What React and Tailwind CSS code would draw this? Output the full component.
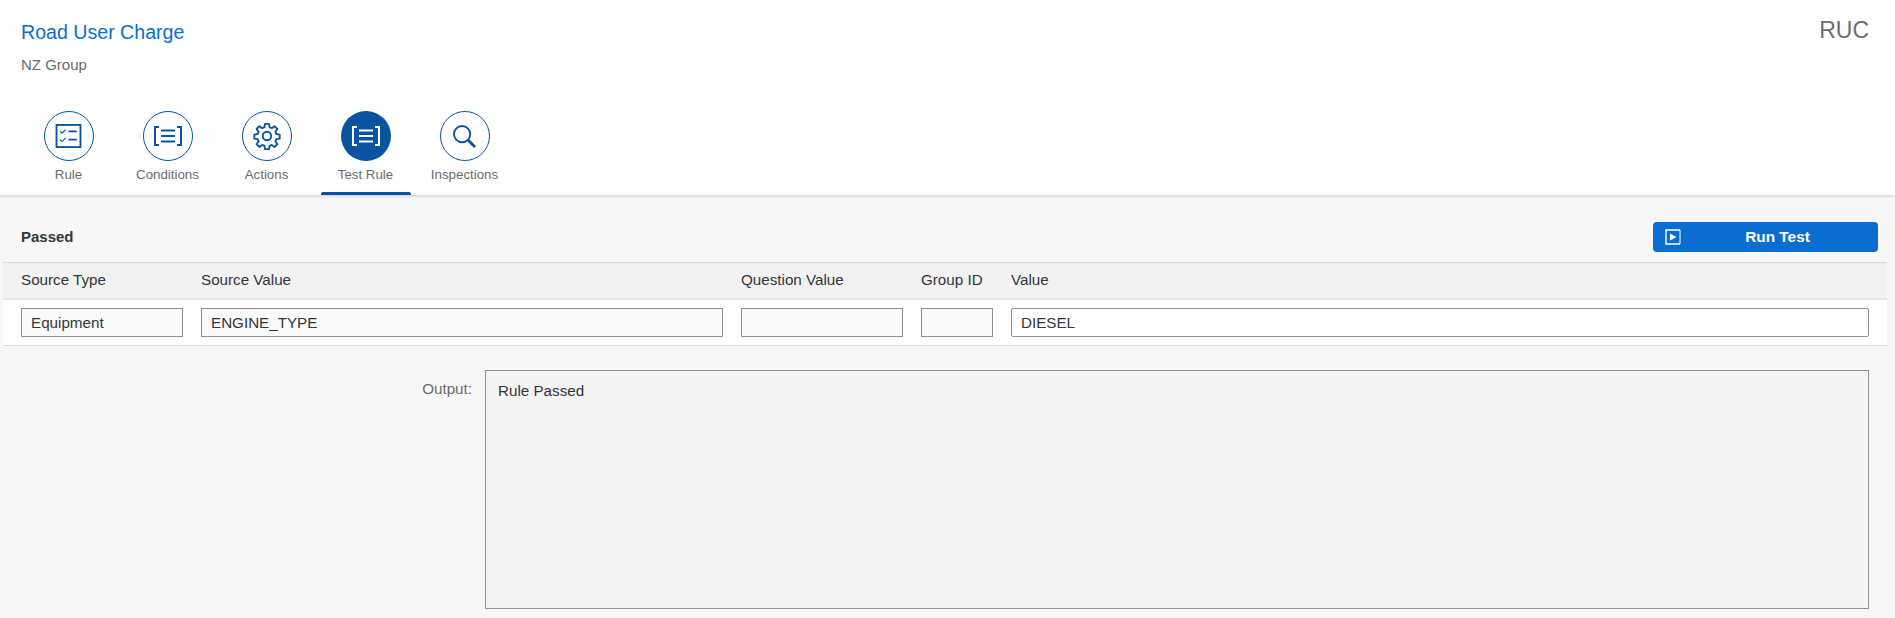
const font = { fontFamily: '"Liberation Sans", Arial, sans-serif' }

const ChecklistIcon = () => (
  <svg viewBox="0 0 28 26" className="w-[27px] h-[24px]" fill="none" stroke="currentColor">
    <rect x="1" y="1" width="26" height="24" strokeWidth="2" />
    <path d="M5 8l2 2 4-4M5 17l2 2 4-4" strokeWidth="1.2" />
    <path d="M14 8h9M14 17h9" strokeWidth="2" />
  </svg>
)

const BracketsIcon = () => (
  <svg viewBox="0 0 28 20" className="w-[28px] h-[20px]" fill="none" stroke="currentColor" strokeWidth="2">
    <path d="M5 1H1v18h4M23 1h4v18h-4" />
    <path d="M7 4.5h14M7 10h14M7 15.5h14" />
  </svg>
)

const GearIcon = () => (
  <svg viewBox="0 0 24 24" className="w-[28px] h-[28px]" fill="none" stroke="currentColor" strokeWidth="1.6">
    <circle cx="12" cy="12" r="3.6" />
    <path d="M10.3 1.6h3.4l.5 2.9 1.9.8 2.4-1.7 2.4 2.4-1.7 2.4.8 1.9 2.9.5v3.4l-2.9.5-.8 1.9 1.7 2.4-2.4 2.4-2.4-1.7-1.9.8-.5 2.9h-3.4l-.5-2.9-1.9-.8-2.4 1.7-2.4-2.4 1.7-2.4-.8-1.9-2.9-.5v-3.4l2.9-.5.8-1.9-1.7-2.4 2.4-2.4 2.4 1.7 1.9-.8z" strokeLinejoin="round" />
  </svg>
)

const SearchIcon = () => (
  <svg viewBox="0 0 24 24" className="w-[23px] h-[23px]" fill="none" stroke="currentColor" strokeWidth="2">
    <circle cx="9.5" cy="9.5" r="8.5" />
    <path d="M15.5 15.5l7.5 7.5" strokeWidth="3" />
  </svg>
)

const tabs = [
  { label: "Rule", icon: <ChecklistIcon /> },
  { label: "Conditions", icon: <BracketsIcon /> },
  { label: "Actions", icon: <GearIcon /> },
  { label: "Test Rule", icon: <BracketsIcon />, active: true },
  { label: "Inspections", icon: <SearchIcon /> },
]

const columns = [
  { label: "Source Type", value: "Equipment", width: "w-[180px]" },
  { label: "Source Value", value: "ENGINE_TYPE", width: "w-[540px]" },
  { label: "Question Value", value: "", width: "w-[180px]" },
  { label: "Group ID", value: "", width: "w-[90px]" },
  { label: "Value", value: "DIESEL", width: "flex-1", editable: true },
]

function Tab({ tab }) {
  return (
    <div className="relative w-[90px] h-[84px] flex flex-col items-center">
      <div
        className={
          tab.active
            ? "w-[50px] h-[50px] rounded-full flex items-center justify-center bg-[#0a53a0] text-white"
            : "w-[50px] h-[50px] rounded-full flex items-center justify-center border border-[#0a53a0] text-[#0a53a0] bg-white"
        }
      >
        {tab.icon}
      </div>
      <span className="mt-[4px] text-[13.3px] leading-[20px] text-[#6a6d70] whitespace-nowrap">{tab.label}</span>
      {tab.active && <div className="absolute bottom-0 left-0 w-[90px] h-[3.5px] rounded-t-[2px] bg-[#0a53a0]" />}
    </div>
  )
}

export default function App() {
  return (
    <div className="h-[618px] overflow-hidden bg-[#f7f7f7] text-[#32363a]" style={font}>
      <header className="h-[195px] bg-white shadow-[0_1px_3px_rgba(0,0,0,0.2)] relative">
        <div className="flex justify-between pl-[21px] pr-[26px] pt-[18px]">
          <div>
            <h1 className="text-[19.6px] leading-[28px] text-[#0a6ed1]">Road User Charge</h1>
            <p className="mt-[9px] text-[15px] leading-[20px] text-[#6a6d70]">NZ Group</p>
          </div>
          <div className="text-[23px] leading-[24px] text-[#6a6d70]">RUC</div>
        </div>
        <nav className="flex gap-[9px] pl-[23.5px] mt-[36px]">
          {tabs.map((tab) => (
            <Tab key={tab.label} tab={tab} />
          ))}
        </nav>
      </header>

      <div className="flex items-center justify-between pl-[21px] pr-[17px] pt-[27px] pb-[10px]">
        <span className="text-[15px] font-bold">Passed</span>
        <button className="w-[225px] h-[30px] rounded-[4px] bg-[#0a6ed1] flex items-center pl-[12px] text-white">
          <svg viewBox="0 0 16 16" className="w-[16px] h-[16px]" fill="none">
            <path d="M15 1H1v14h14" stroke="currentColor" strokeWidth="1.4" />
            <path d="M15 1v14" stroke="currentColor" strokeWidth="1" />
            <path d="M5 4.5l6.5 3.5L5 11.5z" fill="currentColor" />
          </svg>
          <span className="flex-1 pr-[4px] text-[15.4px] font-bold">Run Test</span>
        </button>
      </div>

      <div className="ml-[3px] mr-[8px]">
        <div className="flex h-[38px] items-center pl-[18px] bg-[#f2f2f2] border-t border-[#d9d9d9] border-b-2 border-b-[#e5e5e5]">
          {columns.map((col) => (
            <div key={col.label} className={col.width + " text-[15.2px] text-[#32363a]"}>
              {col.label}
            </div>
          ))}
        </div>
        <div className="flex h-[46px] items-center pl-[18px] pr-[18px] bg-white border-b border-[#d9d9d9]">
          {columns.map((col) => (
            <div key={col.label} className={col.width + (col.editable ? "" : " pr-[18px]")}>
              <input
                readOnly
                value={col.value}
                className={
                  col.editable
                    ? "w-full h-[29px] px-[9px] text-[15.2px] text-[#32363a] bg-white border border-[#89919a] rounded-[2px] outline-none"
                    : "w-full h-[29px] px-[9px] text-[15.2px] text-[#32363a] bg-[#fafafa] border border-[#89919a] outline-none"
                }
              />
            </div>
          ))}
        </div>
      </div>

      <div className="flex pt-[24px] pr-[26px]">
        <label className="w-[472px] pt-[8px] text-right text-[15.2px] text-[#6a6d70]">Output:</label>
        <textarea
          readOnly
          value="Rule Passed"
          className="ml-[13px] flex-1 h-[239px] px-[12px] py-[9px] text-[15.2px] text-[#32363a] bg-[#f4f4f4] border border-[#89919a] outline-none resize-none"
        />
      </div>
    </div>
  )
}
